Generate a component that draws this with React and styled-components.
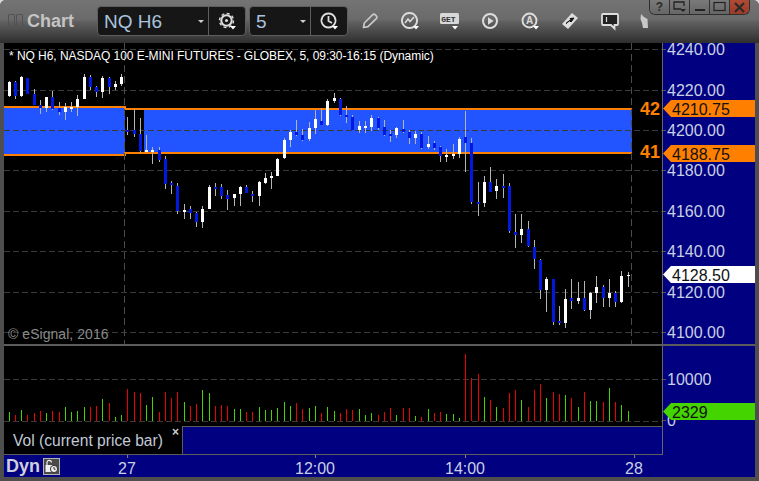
import React from "react"
import styled, { createGlobalStyle } from "styled-components"

const NAVY = "#000080"
const LINE = "#5c5c5c"
const AXIS_TEXT = "#c9d0e4"
const ORANGE = "#ff8000"

// rows are [x, wickTop, wickBottom, bodyTop, bodyBottom, white?], read at 3x, see toBars
const W = 1
const B = 0
const rowsLeft = [
  [28, 63, 110, 66, 108, W], [46, 63, 117, 66, 108, B], [64, 48, 111, 51, 108, W], [82, 54, 102, 54, 102, B],
  [103, 87, 135, 102, 135, B], [121, 120, 162, 135, 144, B], [139, 111, 156, 111, 144, W], [157, 93, 150, 111, 147, B],
  [178, 126, 165, 144, 156, B], [196, 129, 180, 141, 156, W], [214, 126, 156, 141, 147, W], [232, 105, 168, 117, 141, W],
  [253, 42, 117, 51, 117, W], [271, 45, 90, 51, 81, B], [289, 78, 111, 81, 96, B], [307, 48, 114, 54, 96, W],
  [328, 51, 102, 54, 81, B], [346, 63, 90, 72, 81, W], [364, 42, 78, 51, 72, W], [382, 171, 225, 210, 216, B],
  [403, 147, 231, 210, 222, B], [421, 174, 279, 222, 273, B], [439, 225, 276, 270, 276, W], [457, 261, 312, 270, 276, W],
  [478, 261, 306, 270, 300, B], [496, 288, 387, 297, 372, B], [514, 363, 402, 369, 375, B], [532, 369, 462, 378, 453, B],
  [553, 432, 477, 450, 456, W], [571, 438, 477, 447, 459, B], [589, 456, 501, 459, 486, B], [607, 438, 504, 447, 486, W],
  [628, 375, 447, 381, 447, W], [646, 369, 408, 381, 387, B], [664, 372, 417, 381, 408, B], [682, 390, 450, 405, 417, B],
  [703, 402, 438, 402, 414, W], [721, 378, 438, 381, 402, W], [739, 375, 399, 381, 399, B],
]
const rowsMiddle = [
  [7, 393, 426, 402, 408, B], [28, 363, 438, 366, 408, W], [46, 339, 372, 354, 369, W], [64, 336, 387, 348, 354, W],
  [82, 294, 348, 297, 348, W], [103, 234, 297, 240, 294, W], [121, 210, 261, 216, 240, W], [139, 180, 228, 216, 225, B],
  [157, 207, 243, 225, 240, B], [178, 186, 243, 204, 237, W], [196, 150, 222, 177, 204, W], [214, 144, 195, 183, 195, B],
  [232, 117, 198, 123, 195, W], [253, 99, 129, 114, 123, W], [271, 114, 168, 117, 165, B], [289, 138, 189, 165, 171, B],
  [307, 165, 210, 171, 210, B], [328, 183, 219, 198, 210, W], [346, 183, 219, 198, 204, W], [364, 165, 213, 174, 201, W],
  [385, 171, 210, 174, 204, B], [403, 180, 228, 201, 225, B], [421, 210, 246, 222, 228, B], [439, 201, 234, 204, 225, W],
  [460, 180, 219, 207, 216, B], [478, 210, 252, 216, 234, B], [496, 213, 252, 222, 234, W], [514, 216, 267, 222, 264, B],
  [535, 228, 267, 252, 261, W], [553, 243, 270, 249, 264, B], [571, 258, 306, 261, 288, B], [589, 267, 306, 285, 291, W],
  [610, 252, 297, 282, 288, W], [628, 231, 294, 237, 282, W], [646, 153, 336, 231, 249, B], [664, 234, 432, 249, 426, B],
  [685, 366, 468, 426, 432, B], [703, 348, 441, 366, 429, W], [721, 321, 396, 366, 396, B], [739, 357, 417, 378, 393, W],
]
const rowsRight = [
  [130, 252, 324, 288, 294, B], [148, 279, 429, 288, 423, B], [166, 372, 474, 426, 435, B], [184, 372, 459, 417, 435, W],
  [205, 393, 471, 417, 468, B], [223, 450, 537, 471, 507, B], [241, 507, 627, 510, 600, B], [259, 561, 666, 567, 600, W],
  [280, 567, 705, 567, 696, B], [298, 648, 705, 693, 699, B], [316, 597, 714, 627, 699, W], [334, 567, 657, 624, 633, B],
  [355, 576, 642, 624, 633, W], [373, 573, 663, 624, 660, B], [391, 606, 687, 609, 660, W], [409, 558, 639, 591, 609, W],
  [430, 585, 651, 591, 624, B], [448, 567, 651, 609, 624, W], [466, 603, 651, 609, 636, B], [484, 543, 639, 558, 636, W],
  [505, 546, 591, 555, 558, W],
]

const toBars = (rows, ox, oy) =>
  rows.map(([x, wt, wb, bt, bb, white]) => ({
    x: ox + Math.floor(x / 3),
    wickTop: oy + wt / 3,
    wickHeight: (wb - wt) / 3,
    bodyTop: oy + bt / 3,
    bodyHeight: Math.max((bb - bt) / 3, 1),
    white,
  }))

const candles = [...toBars(rowsLeft, 0, 60), ...toBars(rowsMiddle, 250, 60), ...toBars(rowsRight, 460, 90)]

const G = "#44d400"
const R = "#ee0000"
const volLeft = [
  [28, 216, G], [46, 225, R], [64, 210, G], [82, 225, R], [103, 219, R], [121, 213, R], [139, 219, G], [157, 213, R],
  [178, 216, R], [196, 201, G], [214, 216, G], [232, 213, G], [253, 201, G], [271, 201, R], [289, 198, R], [307, 177, G],
  [328, 189, R], [346, 231, G], [364, 225, G], [382, 147, R], [403, 156, R], [421, 159, R], [439, 195, G], [457, 171, G],
  [478, 216, R], [496, 156, R], [514, 174, R], [532, 156, R], [553, 186, G], [571, 198, R], [589, 192, R], [607, 150, G],
  [628, 159, G], [646, 198, R], [664, 195, R], [682, 198, R], [703, 207, G], [721, 207, G], [739, 216, R], [757, 216, R],
  [778, 201, G], [796, 210, G], [814, 210, G], [832, 204, G], [853, 186, G], [871, 198, G], [889, 189, R], [907, 207, R],
  [928, 204, G], [946, 198, G], [964, 219, R], [982, 201, G], [1003, 213, G], [1021, 219, R], [1039, 207, R], [1057, 210, R],
  [1078, 207, G], [1096, 225, G], [1114, 219, G], [1135, 225, R],
]
const volRight = [
  [13, 216, R], [31, 204, R], [49, 225, G], [70, 204, R], [88, 204, R], [106, 228, G], [124, 231, R], [145, 207, G],
  [163, 219, R], [181, 216, R], [199, 222, G], [220, 222, G], [238, 234, G], [256, 42, R], [274, 114, R], [295, 102, R],
  [313, 171, G], [331, 180, R], [349, 201, G], [370, 204, R], [388, 159, R], [406, 150, R], [424, 180, G], [445, 201, R],
  [463, 150, R], [481, 132, R], [499, 174, G], [520, 156, R], [538, 162, R], [556, 165, G], [574, 174, R], [595, 201, G],
  [613, 156, R], [631, 183, G], [649, 183, G], [670, 186, R], [688, 144, G], [706, 186, R], [724, 195, G], [745, 213, G],
]
const volumes = [
  ...volLeft.map(([x, t, c]) => ({ x: Math.floor(x / 3), top: 340 + t / 3, color: c })),
  ...volRight.map(([x, t, c]) => ({ x: 380 + Math.floor(x / 3), top: 340 + t / 3, color: c })),
]

const priceLabels = [
  ["4240.00", 49], ["4220.00", 90], ["4200.00", 130], ["4180.00", 170], ["4160.00", 211],
  ["4140.00", 251], ["4120.00", 292], ["4100.00", 332],
]
const priceGrid = priceLabels.map(([, y]) => y)
const timeLabels = [["27", 127], ["12:00", 315], ["14:00", 465], ["28", 634]]

const GlobalStyle = createGlobalStyle`
  html, body {
    margin: 0;
    padding: 0;
    background: #d8d8d8;
    overflow: hidden;
  }
  body {
    font-family: "Liberation Sans", Arial, sans-serif;
  }
`

const Window = styled.div`
  width: 759px;
  height: 481px;
  display: flex;
  flex-direction: column;
  background: #4e4e4e;
  border-radius: 6px 6px 0 0;
  overflow: hidden;
`

const TitleBar = styled.div`
  height: 43px;
  flex: none;
  display: flex;
  align-items: flex-start;
  padding: 6px 8px 0 8px;
  box-sizing: border-box;
  background: linear-gradient(#747474 0, #6a6a6a 20px, #626262 21px, #2e2e2e 43px);
`

const Grip = styled.div`
  flex: none;
  display: flex;
  gap: 1px;
  margin-top: 8px;
  margin-right: 4px;

  span {
    width: 5px;
    height: 11px;
    border: 1px solid #525252;
    border-radius: 1px;
  }
`

const Title = styled.div`
  width: 70px;
  flex: none;
  font-size: 18px;
  line-height: 30px;
  font-weight: bold;
  color: #c4c4c4;
`

const FieldGroup = styled.div`
  height: 30px;
  width: ${(p) => p.$width}px;
  flex: none;
  box-sizing: border-box;
  display: flex;
  margin-right: ${(p) => p.$gap}px;
  background: #161616;
  border: 1px solid #5e5e5e;
  border-radius: 4px;
`

const FieldValue = styled.div`
  flex: 1;
  position: relative;
  padding-left: 6px;
  font-size: 19px;
  line-height: 29px;
  color: #a9c3de;
  border-right: 1px solid #5e5e5e;

  &::after {
    content: "";
    position: absolute;
    right: 4px;
    top: 13px;
    border: 3px solid transparent;
    border-top: 3px solid #cfcfcf;
  }
`

const FieldButton = styled.div`
  width: 36px;
  flex: none;
  display: flex;
  align-items: center;
  justify-content: center;
`

const ToolButton = styled.div`
  width: ${(p) => p.$width || 40}px;
  height: 30px;
  flex: none;
  display: flex;
  align-items: center;
  justify-content: ${(p) => (p.$end ? "flex-end" : "center")};
`

const GetLabel = styled.text`
  font-family: "Liberation Mono", monospace;
  font-size: 8px;
  font-weight: bold;
  fill: #333;
`

const LetterLabel = styled.text`
  font-family: "Liberation Sans", Arial, sans-serif;
  font-size: 10px;
  font-weight: bold;
  fill: #ddd;
`

const WindowButtons = styled.div`
  display: flex;
  flex: none;
  width: 101px;
  margin: -6px 0 0 -1px;
  height: 15px;
  box-sizing: border-box;
  border: 1px solid #2e2e2e;
  border-top: none;
  border-radius: 0 0 6px 6px;
  overflow: hidden;
`

const WindowButton = styled.div`
  flex: 1;
  display: flex;
  align-items: center;
  justify-content: center;
  font-size: 12px;
  font-weight: bold;
  color: #2a2a2a;
  border-left: ${(p) => (p.$first ? "none" : "1px solid #333")};
  background: ${(p) =>
    p.$close ? "linear-gradient(#b04a34, #9c3a28)" : "linear-gradient(#7a7a7a, #666)"};
`

const Frame = styled.div`
  flex: 1;
  display: flex;
  flex-direction: column;
  padding: 0 4px 4px;
  min-height: 0;
`

const PriceRow = styled.div`
  height: 301px;
  flex: none;
  display: flex;
`

const ChartPane = styled.div`
  position: relative;
  width: 658px;
  flex: none;
  background: #000;
  overflow: hidden;

  svg {
    display: block;
  }
`

const Heading = styled.div`
  position: absolute;
  left: 5px;
  top: 5px;
  font-size: 12px;
  line-height: 16px;
  letter-spacing: -0.05px;
  color: #fff;
  white-space: nowrap;
`

const Copyright = styled.div`
  position: absolute;
  left: 4px;
  top: 283px;
  font-size: 14px;
  line-height: 16px;
  letter-spacing: 0.05px;
  color: #8a8a8a;
`

const ZoneNumber = styled.div`
  position: absolute;
  left: 636px;
  font-size: 18px;
  line-height: 18px;
  font-weight: bold;
  color: ${ORANGE};
`

const Axis = styled.div`
  position: relative;
  flex: 1;
  background: ${NAVY};
  border-left: 1px solid #666;
  overflow: hidden;
`

const AxisLabel = styled.div`
  position: absolute;
  left: 0;
  padding-left: 4px;
  font-size: 16px;
  line-height: 16px;
  color: ${AXIS_TEXT};

  &::before {
    content: "";
    position: absolute;
    left: 0;
    top: 7px;
    width: 3px;
    height: 1px;
    background: #555;
  }
`

const AxisTag = styled.div`
  position: absolute;
  left: 0;
  right: 0;
  height: 17px;
  padding-left: 9px;
  font-size: 16px;
  line-height: 19px;
  color: #111;
  background: ${(p) => p.$color};
  clip-path: polygon(0 50%, 8px 0, 100% 0, 100% 100%, 8px 100%);
`

const Separator = styled.div`
  height: 2px;
  flex: none;
  background: ${LINE};
`

const LowerRow = styled.div`
  height: 109px;
  flex: none;
  display: flex;
`

const LowerLeft = styled.div`
  width: 659px;
  flex: none;
  display: flex;
  flex-direction: column;
  border-right: 1px solid #666;
  box-sizing: border-box;
`

const VolumePane = styled.div`
  height: 80px;
  flex: none;
  background: #000;

  svg {
    display: block;
  }
`

const StudyRow = styled.div`
  flex: 1;
  display: flex;
`

const StudyTab = styled.div`
  position: relative;
  width: 179px;
  flex: none;
  box-sizing: border-box;
  padding: 6px 0 0 9px;
  background: #000;
  border-right: 1px solid ${LINE};
  border-bottom: 1px solid ${LINE};
  font-size: 15.6px;
  line-height: 17px;
  color: #c2cad8;
  white-space: nowrap;
`

const CloseMark = styled.span`
  position: absolute;
  right: 3px;
  top: -1px;
  font-size: 12px;
  line-height: 14px;
  font-weight: bold;
  color: #ccc;
`

const StudyFill = styled.div`
  flex: 1;
  background: ${NAVY};
  border-top: 1px solid ${LINE};
  border-bottom: 1px solid ${LINE};
`

const VolumeAxis = styled(Axis)`
  border-left: none;
`

const TimeRow = styled.div`
  position: relative;
  height: 22px;
  flex: none;
  display: flex;
  align-items: center;
  background: ${NAVY};
`

const DynLabel = styled.div`
  margin-left: 2px;
  font-size: 18px;
  font-weight: bold;
  color: #cfd0dc;
`

const LockBox = styled.div`
  width: 17px;
  height: 17px;
  margin-left: 3px;
  box-sizing: border-box;
  display: flex;
  align-items: center;
  justify-content: center;
  background: #4a4a4a;
  border: 1px solid #b4b4b4;
`

const TimeLabel = styled.div`
  position: absolute;
  top: 4px;
  transform: translateX(-50%);
  font-size: 16px;
  line-height: 20px;
  color: ${AXIS_TEXT};

  &::before {
    content: "";
    position: absolute;
    left: 50%;
    top: -4px;
    width: 1px;
    height: 3px;
    background: #888;
  }
`

const Drop = () => <polygon points="13,15 19,15 16,18.5" fill="#fff" />

const GearIcon = () => (
  <svg width="20" height="20" viewBox="0 0 20 20" fill="none">
    <circle cx="9.5" cy="9.5" r="5.2" stroke="#ddd" strokeWidth="2" />
    <circle cx="9.5" cy="9.5" r="7" stroke="#ddd" strokeWidth="1.4" strokeDasharray="3 2.5" />
    <circle cx="9.5" cy="9.5" r="1.5" fill="#ddd" />
    <Drop />
  </svg>
)

const ClockIcon = () => (
  <svg width="20" height="20" viewBox="0 0 20 20" fill="none">
    <path d="M9.5 2.5a7 7 0 1 1-.01 0M9.5 5v5l3.5 2" stroke="#ddd" strokeWidth="1.8" />
    <Drop />
  </svg>
)

const PencilIcon = () => (
  <svg width="18" height="18" viewBox="0 0 18 18" fill="none">
    <path d="M2.5 15.5l.8-4.5L11.5 2.8c.8-.8 2-.8 2.8 0l1 1c.8.8.8 2 0 2.8L7 14.7z" stroke="#c8c8c8" strokeWidth="1.7" strokeLinejoin="round" />
  </svg>
)

const TrendIcon = () => (
  <svg width="20" height="20" viewBox="0 0 20 20" fill="none">
    <path d="M9.5 2a7.5 7.5 0 1 1-.01 0" stroke="#ddd" strokeWidth="1.9" />
    <path d="M5 12l3-4 2 2.5 4-4.5" stroke="#ddd" strokeWidth="1.5" />
    <Drop />
  </svg>
)

const GetIcon = () => (
  <svg width="24" height="20" viewBox="0 0 24 20">
    <rect x="2" y="2" width="19" height="11" rx="1.5" fill="#d8d8d8" />
    <GetLabel x="3.2" y="10.5">GET</GetLabel>
    <polygon points="14,15 20,15 17,18.5" fill="#fff" />
  </svg>
)

const PlayIcon = () => (
  <svg width="20" height="20" viewBox="0 0 20 20" fill="none">
    <circle cx="10" cy="10" r="7" stroke="#ddd" strokeWidth="2" />
    <polygon points="8,6.2 8,13.8 13.6,10" fill="#ddd" />
  </svg>
)

const LetterIcon = () => (
  <svg width="20" height="20" viewBox="0 0 20 20" fill="none">
    <circle cx="9.5" cy="9.5" r="7" stroke="#ddd" strokeWidth="1.9" />
    <LetterLabel x="6" y="13">A</LetterLabel>
    <Drop />
  </svg>
)

const DiamondIcon = () => (
  <svg width="20" height="20" viewBox="0 0 20 20">
    <polygon points="12,2 18,7 8,18 2,13" fill="#ddd" />
    <path d="M6 12.5l3.5-3 1.5 1.5 3-4-4 .6 1 1.2-3.5 2.5z" fill="#111" stroke="#111" />
  </svg>
)

const BubbleIcon = () => (
  <svg width="20" height="20" viewBox="0 0 20 20" fill="none">
    <path d="M3 3h14a1 1 0 0 1 1 1v9a1 1 0 0 1-1 1h-2.5v3.5L11 14H3a1 1 0 0 1-1-1V4a1 1 0 0 1 1-1z" stroke="#ddd" strokeWidth="1.8" fill="#222" />
    <path d="M6.5 6v5" stroke="#ddd" strokeWidth="1.2" />
  </svg>
)

const HandIcon = () => (
  <svg width="10" height="16" viewBox="0 0 10 16">
    <path d="M1 1l3 3 3.5 2 .5 9H3L2 10 .5 6z" fill="#c8c8c8" />
  </svg>
)

const RestoreGlyph = () => (
  <svg width="14" height="12" viewBox="0 0 14 12" fill="none">
    <path d="M8 8H1V1h10v4" stroke="#222" strokeWidth="1.3" />
    <polygon points="7,8 13,8 10,11" fill="#222" />
  </svg>
)

const MinGlyph = () => (
  <svg width="12" height="12" viewBox="0 0 12 12">
    <rect x="1" y="8" width="10" height="2" fill="#222" />
  </svg>
)

const MaxGlyph = () => (
  <svg width="13" height="12" viewBox="0 0 13 12" fill="none">
    <rect x="1" y="1.5" width="11" height="8" stroke="#222" strokeWidth="1.2" />
  </svg>
)

const CloseGlyph = () => (
  <svg width="13" height="11" viewBox="0 0 13 11" fill="none">
    <path d="M2 1l9 9M11 1l-9 9" stroke="#2a2a2a" strokeWidth="2.2" />
  </svg>
)

const LockIcon = () => (
  <svg width="15" height="15" viewBox="0 0 15 15" fill="none">
    <path d="M3 6V3.5a2.2 2.2 0 0 1 4.4 0" stroke="#eee" strokeWidth="1.2" />
    <rect x="1.5" y="6" width="7" height="7" fill="#eee" />
    <circle cx="10" cy="10" r="3.6" fill="#eee" stroke="#333" />
    <path d="M10 8v2.2h1.6" stroke="#333" />
  </svg>
)

const Zone = () => (
  <g shapeRendering="crispEdges">
    <rect x="4" y="108" width="121" height="46" fill="#2255ff" />
    <rect x="144" y="110" width="488" height="42" fill="#2255ff" />
    <rect x="4" y="106" width="122" height="2" fill={ORANGE} />
    <rect x="4" y="154" width="122" height="2" fill={ORANGE} />
    <rect x="124" y="108" width="508" height="2" fill={ORANGE} />
    <rect x="124" y="152" width="508" height="2" fill={ORANGE} />
  </g>
)

const PriceChart = () => (
  <svg width="658" height="301" viewBox="4 43 658 301">
    <Zone />
    {priceGrid.map((y) => (
      <line key={y} x1="4" x2="662" y1={y + 0.5} y2={y + 0.5} stroke="#3a3a3a" strokeDasharray="6 3" />
    ))}
    {[124, 631].map((x) => (
      <line key={x} x1={x + 0.5} x2={x + 0.5} y1="43" y2="344" stroke="#4a4a4a" strokeDasharray="7 4" />
    ))}
    <g shapeRendering="crispEdges">
      {candles.map((c) => (
        <g key={c.x}>
          <rect x={c.x} y={c.wickTop} width="1" height={c.wickHeight} fill="#b4b4b4" />
          <rect x={c.x - 1} y={c.bodyTop} width="3" height={c.bodyHeight} fill={c.white ? "#fff" : "#0018e0"} />
        </g>
      ))}
    </g>
  </svg>
)

const VolumeChart = () => (
  <svg width="658" height="80" viewBox="4 346 658 80">
    {[379, 421].map((y) => (
      <line key={y} x1="4" x2="662" y1={y + 0.5} y2={y + 0.5} stroke="#3a3a3a" strokeDasharray="6 3" />
    ))}
    <g shapeRendering="crispEdges">
      {volumes.map((v) => (
        <rect key={v.x} x={v.x} y={v.top} width="1" height={421 - v.top} fill={v.color} />
      ))}
    </g>
  </svg>
)

const App = () => (
  <>
    <GlobalStyle />
    <Window>
      <TitleBar>
        <Grip>
          <span />
          <span />
        </Grip>
        <Title>Chart</Title>
        <FieldGroup $width={149} $gap={3}>
          <FieldValue>NQ H6</FieldValue>
          <FieldButton>
            <GearIcon />
          </FieldButton>
        </FieldGroup>
        <FieldGroup $width={99} $gap={2}>
          <FieldValue>5</FieldValue>
          <FieldButton>
            <ClockIcon />
          </FieldButton>
        </FieldGroup>
        <ToolButton><PencilIcon /></ToolButton>
        <ToolButton><TrendIcon /></ToolButton>
        <ToolButton><GetIcon /></ToolButton>
        <ToolButton><PlayIcon /></ToolButton>
        <ToolButton><LetterIcon /></ToolButton>
        <ToolButton><DiamondIcon /></ToolButton>
        <ToolButton><BubbleIcon /></ToolButton>
        <ToolButton $width={20} $end><HandIcon /></ToolButton>
        <WindowButtons>
          <WindowButton $first>?</WindowButton>
          <WindowButton><RestoreGlyph /></WindowButton>
          <WindowButton><MinGlyph /></WindowButton>
          <WindowButton><MaxGlyph /></WindowButton>
          <WindowButton $close><CloseGlyph /></WindowButton>
        </WindowButtons>
      </TitleBar>
      <Frame>
        <PriceRow>
          <ChartPane>
            <PriceChart />
            <Heading>* NQ H6, NASDAQ 100 E-MINI FUTURES - GLOBEX, 5, 09:30-16:15 (Dynamic)</Heading>
            <Copyright>© eSignal, 2016</Copyright>
            <ZoneNumber style={{ top: 57 }}>42</ZoneNumber>
            <ZoneNumber style={{ top: 100 }}>41</ZoneNumber>
          </ChartPane>
          <Axis>
            {priceLabels.map(([text, y]) => (
              <AxisLabel key={text} style={{ top: y - 43 - 7 }}>{text}</AxisLabel>
            ))}
            <AxisTag $color={ORANGE} style={{ top: 57 }}>4210.75</AxisTag>
            <AxisTag $color={ORANGE} style={{ top: 102 }}>4188.75</AxisTag>
            <AxisTag $color="#fff" style={{ top: 223 }}>4128.50</AxisTag>
          </Axis>
        </PriceRow>
        <Separator />
        <LowerRow>
          <LowerLeft>
            <VolumePane>
              <VolumeChart />
            </VolumePane>
            <StudyRow>
              <StudyTab>
                Vol (current price bar)
                <CloseMark>×</CloseMark>
              </StudyTab>
              <StudyFill />
            </StudyRow>
          </LowerLeft>
          <VolumeAxis>
            <AxisLabel style={{ top: 26 }}>10000</AxisLabel>
            <AxisLabel style={{ top: 67 }}>0</AxisLabel>
            <AxisTag $color="#44d400" style={{ top: 57 }}>2329</AxisTag>
          </VolumeAxis>
        </LowerRow>
        <TimeRow>
          <DynLabel>Dyn</DynLabel>
          <LockBox>
            <LockIcon />
          </LockBox>
          {timeLabels.map(([text, x]) => (
            <TimeLabel key={text} style={{ left: x - 4 }}>{text}</TimeLabel>
          ))}
        </TimeRow>
      </Frame>
    </Window>
  </>
)

export default App
